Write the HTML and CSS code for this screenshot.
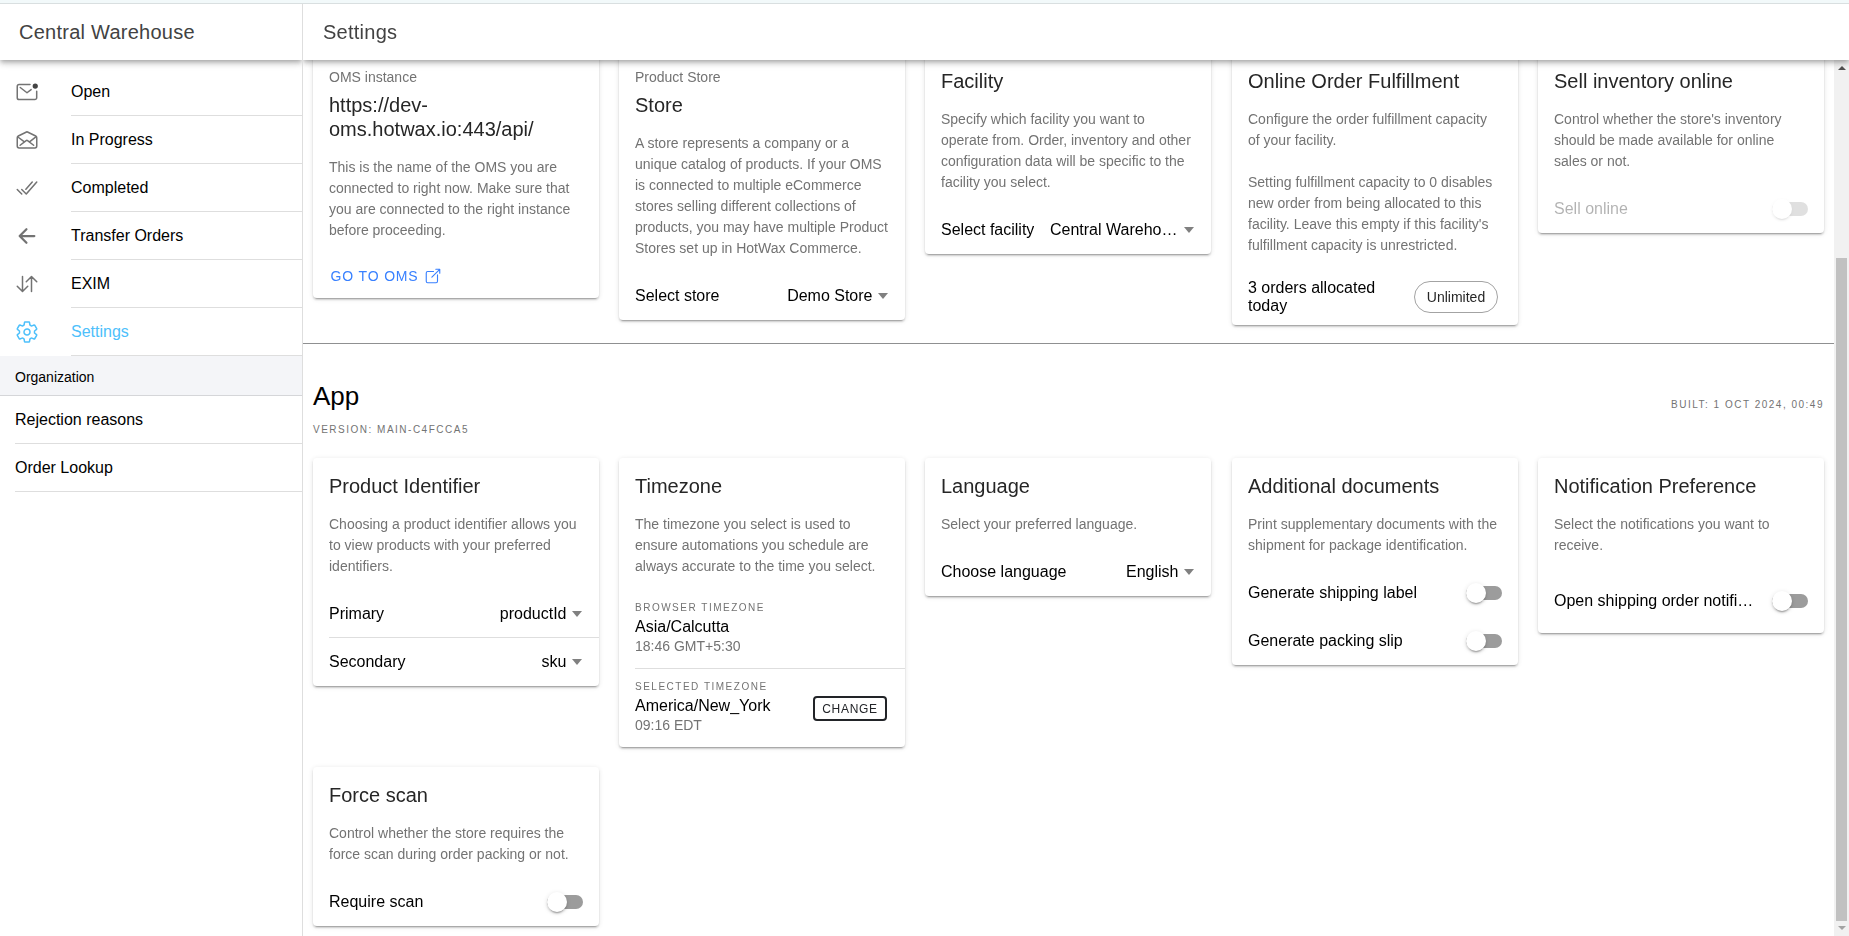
FILE: index.html
```html
<!DOCTYPE html>
<html lang="en">
<head>
<meta charset="utf-8">
<title>Settings</title>
<link rel="stylesheet" href="styles.css">
</head>
<body>
<div class="strip"></div>
<div class="app">
  <aside class="menu">
    <header class="toolbar"><h1 class="toolbar-title">Central Warehouse</h1></header>
    <nav class="menu-list">
      <a class="nav"><svg class="icon" viewBox="0 0 512 512"><path d="M320 96H88a40 40 0 00-40 40v240a40 40 0 0040 40h334.73a40 40 0 0040-40V239"/><path d="M112 160l144 112 87.65-68.17"/><circle class="dot" cx="431.95" cy="128.05" r="56"/></svg><span class="nav-label">Open</span></a>
      <a class="nav"><svg class="icon" viewBox="0 0 512 512"><path d="M441.6 171.61L266.87 85.37a24.57 24.57 0 00-21.74 0L70.4 171.61A40 40 0 0048 207.39v179.13C48 408.17 66 426 88 426h336c22 0 40-17.83 40-39.48V207.39a40 40 0 00-22.4-35.78z"/><path d="M397.33 368L268.07 267.46a24 24 0 00-29.47 0L109.33 368M309.33 295l136-103.9M61.33 192l139.46 104.65"/></svg><span class="nav-label">In Progress</span></a>
      <a class="nav"><svg class="icon" viewBox="0 0 512 512"><path d="M464 128L240 384l-96-96M144 384l-96-96M368 128L232 284"/></svg><span class="nav-label">Completed</span></a>
      <a class="nav"><svg class="icon icon-bold" viewBox="0 0 512 512"><path d="M244 400L100 256l144-144M120 256h292"/></svg><span class="nav-label">Transfer Orders</span></a>
      <a class="nav"><svg class="icon" viewBox="0 0 512 512"><path d="M464 208L352 96 240 208M352 113.13V416M48 304l112 112 112-112M160 398V96"/></svg><span class="nav-label">EXIM</span></a>
      <a class="nav nav-active"><svg class="icon" viewBox="0 0 512 512"><path d="M262.29 192.31a64 64 0 1057.4 57.4 64.13 64.13 0 00-57.4-57.4zM416.39 256a154.34 154.34 0 01-1.53 20.79l45.21 35.46a10.81 10.81 0 012.45 13.75l-42.77 74a10.81 10.81 0 01-13.14 4.59l-44.9-18.08a16.11 16.11 0 00-15.17 1.75A164.48 164.48 0 01325 400.8a15.94 15.94 0 00-8.82 12.14l-6.73 47.89a11.08 11.08 0 01-10.68 9.17h-85.54a11.11 11.11 0 01-10.69-8.87l-6.72-47.82a16.07 16.07 0 00-9-12.22 155.3 155.3 0 01-21.46-12.57 16 16 0 00-15.11-1.71l-44.89 18.07a10.81 10.81 0 01-13.14-4.58l-42.77-74a10.8 10.8 0 012.45-13.75l38.21-30a16.05 16.05 0 006-14.08c-.36-4.17-.58-8.33-.58-12.5s.21-8.27.58-12.35a16 16 0 00-6.07-13.94l-38.19-30A10.81 10.81 0 0149.48 186l42.77-74a10.81 10.81 0 0113.14-4.59l44.9 18.08a16.11 16.11 0 0015.17-1.75A164.48 164.48 0 01187 111.2a15.94 15.94 0 008.82-12.14l6.73-47.89A11.08 11.08 0 01213.23 42h85.54a11.11 11.11 0 0110.69 8.87l6.72 47.82a16.07 16.07 0 009 12.22 155.3 155.3 0 0121.46 12.57 16 16 0 0015.11 1.71l44.89-18.07a10.81 10.81 0 0113.14 4.58l42.77 74a10.8 10.8 0 01-2.45 13.75l-38.21 30a16.05 16.05 0 00-6.05 14.08c.33 4.14.55 8.3.55 12.47z"/></svg><span class="nav-label">Settings</span></a>
      <div class="menu-group">Organization</div>
      <a class="nav"><span class="nav-label">Rejection reasons</span></a>
      <a class="nav"><span class="nav-label">Order Lookup</span></a>
    </nav>
  </aside>

  <main class="page">
    <header class="toolbar"><h1 class="toolbar-title">Settings</h1></header>
    <div class="page-body">
      <div class="content">
        <section class="cards cards-first">
          <article class="card">
            <div class="card-header"><p class="card-subtitle">OMS instance</p><h2 class="card-title">https://dev-oms.hotwax.io:443/api/</h2></div>
            <p class="card-text">This is the name of the OMS you are connected to right now. Make sure that you are connected to the right instance before proceeding.</p>
            <a class="link-button">GO TO OMS<svg class="link-icon" viewBox="0 0 512 512"><path d="M384 224v184a40 40 0 01-40 40H104a40 40 0 01-40-40V168a40 40 0 0140-40h167.48M336 64h112v112M224 288L440 72"/></svg></a>
          </article>
          <article class="card">
            <div class="card-header"><p class="card-subtitle">Product Store</p><h2 class="card-title">Store</h2></div>
            <p class="card-text">A store represents a company or a unique catalog of products. If your OMS is connected to multiple eCommerce stores selling different collections of products, you may have multiple Product Stores set up in HotWax Commerce.</p>
            <div class="item"><span class="label">Select store</span><span class="select"><span class="select-value">Demo Store</span><i class="caret"></i></span></div>
          </article>
          <article class="card">
            <div class="card-header"><h2 class="card-title">Facility</h2></div>
            <p class="card-text">Specify which facility you want to operate from. Order, inventory and other configuration data will be specific to the facility you select.</p>
            <div class="item"><span class="label label-fixed">Select facility</span><span class="select"><span class="select-value">Central Warehouse</span><i class="caret"></i></span></div>
          </article>
          <article class="card">
            <div class="card-header"><h2 class="card-title">Online Order Fulfillment</h2></div>
            <p class="card-text">Configure the order fulfillment capacity of your facility.<br><br>Setting fulfillment capacity to 0 disables new order from being allocated to this facility. Leave this empty if this facility's fulfillment capacity is unrestricted.</p>
            <div class="item item-capacity"><span class="label label-wrap">3 orders allocated today</span><span class="chip">Unlimited</span></div>
          </article>
          <article class="card">
            <div class="card-header"><h2 class="card-title">Sell inventory online</h2></div>
            <p class="card-text">Control whether the store's inventory should be made available for online sales or not.</p>
            <div class="item item-disabled"><span class="label">Sell online</span><span class="toggle"></span></div>
          </article>
        </section>

        <hr class="rule">

        <div class="section-header">
          <h1 class="section-title">App<span class="overline section-version">VERSION: MAIN-C4FCCA5</span></h1>
          <span class="overline section-built">BUILT: 1 OCT 2024, 00:49</span>
        </div>

        <section class="cards">
          <article class="card">
            <div class="card-header"><h2 class="card-title">Product Identifier</h2></div>
            <p class="card-text">Choosing a product identifier allows you to view products with your preferred identifiers.</p>
            <div class="item item-lined"><span class="label">Primary</span><span class="select"><span class="select-value">productId</span><i class="caret"></i></span></div>
            <div class="item"><span class="label">Secondary</span><span class="select"><span class="select-value">sku</span><i class="caret"></i></span></div>
          </article>
          <article class="card">
            <div class="card-header"><h2 class="card-title">Timezone</h2></div>
            <p class="card-text">The timezone you select is used to ensure automations you schedule are always accurate to the time you select.</p>
            <div class="item item-zone item-lined"><div class="zone"><p class="overline">BROWSER TIMEZONE</p><p class="zone-name">Asia/Calcutta</p><p class="zone-time">18:46 GMT+5:30</p></div></div>
            <div class="item item-zone"><div class="zone"><p class="overline">SELECTED TIMEZONE</p><p class="zone-name">America/New_York</p><p class="zone-time">09:16 EDT</p></div><button class="outline-button">CHANGE</button></div>
          </article>
          <article class="card">
            <div class="card-header"><h2 class="card-title">Language</h2></div>
            <p class="card-text">Select your preferred language.</p>
            <div class="item"><span class="label">Choose language</span><span class="select"><span class="select-value">English</span><i class="caret"></i></span></div>
          </article>
          <article class="card">
            <div class="card-header"><h2 class="card-title">Additional documents</h2></div>
            <p class="card-text">Print supplementary documents with the shipment for package identification.</p>
            <div class="item"><span class="label">Generate shipping label</span><span class="toggle"></span></div>
            <div class="item"><span class="label">Generate packing slip</span><span class="toggle"></span></div>
          </article>
          <article class="card">
            <div class="card-header"><h2 class="card-title">Notification Preference</h2></div>
            <p class="card-text">Select the notifications you want to receive.</p>
            <div class="item item-tall"><span class="label">Open shipping order notifications</span><span class="toggle"></span></div>
          </article>
          <article class="card">
            <div class="card-header"><h2 class="card-title">Force scan</h2></div>
            <p class="card-text">Control whether the store requires the force scan during order packing or not.</p>
            <div class="item"><span class="label">Require scan</span><span class="toggle"></span></div>
          </article>
        </section>
      </div>
      <div class="scrollbar"><i class="arrow arrow-up"></i><div class="thumb"></div><i class="arrow arrow-down"></i></div>
    </div>
  </main>
</div>
</body>
</html>
```
FILE: styles.css
```css
* { box-sizing: border-box; }
html, body { height: 100%; }
body {
  margin: 0;
  display: flex;
  flex-direction: column;
  overflow: hidden;
  background: #fff;
  color: #000;
  font: 16px/1.2 "Liberation Sans", Arial, sans-serif;
}
h1, h2, p { margin: 0; font-weight: 400; }

.strip { flex: none; height: 4px; background: #f2f9fa; border-bottom: 1px solid #d9dfe0; }
.app { flex: 1; min-height: 0; display: flex; }

.menu { flex: none; width: 303px; border-right: 1px solid #dedede; overflow: hidden; }
.page { flex: 1; min-width: 0; display: flex; flex-direction: column; overflow: hidden; }

.toolbar {
  position: relative;
  z-index: 2;
  flex: none;
  height: 56px;
  padding: 0 19px 0 20px;
  display: flex;
  align-items: center;
  background: #fff;
  box-shadow: 0 2px 4px -1px rgba(0,0,0,.2), 0 4px 5px 0 rgba(0,0,0,.14), 0 1px 10px 0 rgba(0,0,0,.12);
}
.menu .toolbar { padding-left: 19px; }
.toolbar-title { color: #424242; font-size: 20px; letter-spacing: .25px; }

.menu-list { padding-top: 8px; }
.nav { display: flex; align-items: center; height: 48px; padding-left: 15px; gap: 32px; }
.nav-label { flex: 1; height: 48px; line-height: 47px; border-bottom: 1px solid #dedede; }
.nav-active { color: #4dc0fb; }
.icon { flex: none; width: 24px; height: 24px; fill: none; stroke: #737373; stroke-width: 32; stroke-linecap: round; stroke-linejoin: round; }
.icon-bold { stroke-width: 48; }
.dot { fill: #444; stroke: none; }
.nav-active .icon { stroke: #4dc0fb; }
.menu-group { height: 40px; padding-left: 15px; line-height: 42px; font-size: 14px; background: #f4f5f8; border-bottom: 1px solid #d5d6d9; }

.page-body { flex: 1; min-height: 0; display: flex; }
.content { flex: 1; min-width: 0; overflow: hidden; }
.cards { display: grid; grid-template-columns: 286px 286px 287px 286px 286px; align-items: start; gap: 20px; padding: 10px; }
.cards-first { margin-top: -17px; }
.card {
  width: 286px;
  overflow: hidden;
  border-radius: 4px;
  background: #fff;
  box-shadow: 0 3px 1px -2px rgba(0,0,0,.2), 0 2px 2px 0 rgba(0,0,0,.14), 0 1px 5px 0 rgba(0,0,0,.12);
  transform: translateZ(0);
}
.card-header { padding: 16px; }
.card-subtitle { margin-bottom: 8px; color: #737373; font-size: 14px; line-height: 16px; }
.card-title { color: #262626; font-size: 20px; line-height: 24px; }
.card-text { padding: 0 16px 13px; color: #737373; font-size: 14px; line-height: 21px; }

.item { display: flex; align-items: center; justify-content: space-between; height: 48px; margin-left: 16px; padding-right: 16px; }
.item-lined { border-bottom: 1px solid #dedede; }
.item-capacity { height: 56px; padding-right: 20px; }
.item-tall { height: 64px; }
.item-zone { height: 78px; padding-bottom: 2px; }
.item-zone.item-lined { height: 79px; }
.item-disabled .label { opacity: .3; }
.item-disabled .toggle { opacity: .3; }
.label { flex: 1; min-width: 0; overflow: hidden; text-overflow: ellipsis; white-space: nowrap; }
.label-fixed { flex: none; margin-right: 15.6px; }
.label-wrap { flex: none; width: 140px; line-height: 18px; white-space: normal; }

.select { display: flex; align-items: center; min-width: 0; padding-right: 1px; }
.select-value { min-width: 0; overflow: hidden; text-overflow: ellipsis; white-space: nowrap; }
.caret { flex: none; margin-left: 5.5px; border: 5px solid transparent; border-top: 6px solid #808080; border-bottom: 0; }

.toggle { position: relative; flex: none; width: 36px; height: 14px; margin-left: 16px; border-radius: 7px; background: #9c9c9c; }
.toggle::before {
  content: "";
  position: absolute;
  top: -3px;
  left: 0;
  width: 20px;
  height: 20px;
  border-radius: 50%;
  background: #fff;
  box-shadow: 0 3px 1px -2px rgba(0,0,0,.2), 0 2px 2px 0 rgba(0,0,0,.14), 0 1px 5px 0 rgba(0,0,0,.12);
}

.chip { display: flex; align-items: center; justify-content: center; width: 84px; height: 32px; border: 1px solid #a3a3a3; border-radius: 16px; color: #262626; font-size: 14px; }
.link-button { display: flex; align-items: center; height: 44px; padding-left: 17.6px; color: #3880ff; font-size: 14px; letter-spacing: .84px; }
.link-icon { width: 18px; height: 18px; margin-left: 5.8px; fill: none; stroke: currentColor; stroke-width: 32; stroke-linecap: round; stroke-linejoin: round; }
.outline-button { position: relative; top: 1px; height: 25px; width: 74px; margin-right: 2px; padding: 1px 0 0; border: 2px solid #222428; border-radius: 4px; background: none; color: #222428; font: 12px "Liberation Sans", Arial, sans-serif; letter-spacing: .72px; }

.overline { color: #737373; font-size: 10px; line-height: 12px; letter-spacing: 1.5px; }
.zone-name { margin: 4px 0 2px; line-height: 18px; }
.zone-time { color: #737373; font-size: 14px; line-height: 17px; }

.rule { height: 1px; margin: 8px 0; border: 0; background: #8f9091; }
.section-header { display: flex; align-items: center; justify-content: space-between; height: 96px; padding: 16px 10px 0; }
.section-title { display: flex; flex-direction: column; font-size: 26px; line-height: 30px; }
.section-version { margin-top: 13px; }
.section-built { margin-bottom: 6px; }

.scrollbar { flex: none; width: 15px; display: flex; flex-direction: column; align-items: center; background: #f1f1f1; }
.arrow { border: 4px solid transparent; }
.arrow-up { margin-top: 6px; border-top: 0; border-bottom-color: #505050; }
.arrow-down { border-bottom: 0; border-top-color: #a3a3a3; }
.thumb { width: 11px; height: 663px; margin: 188px 0 5px; background: #c1c1c1; }
```
